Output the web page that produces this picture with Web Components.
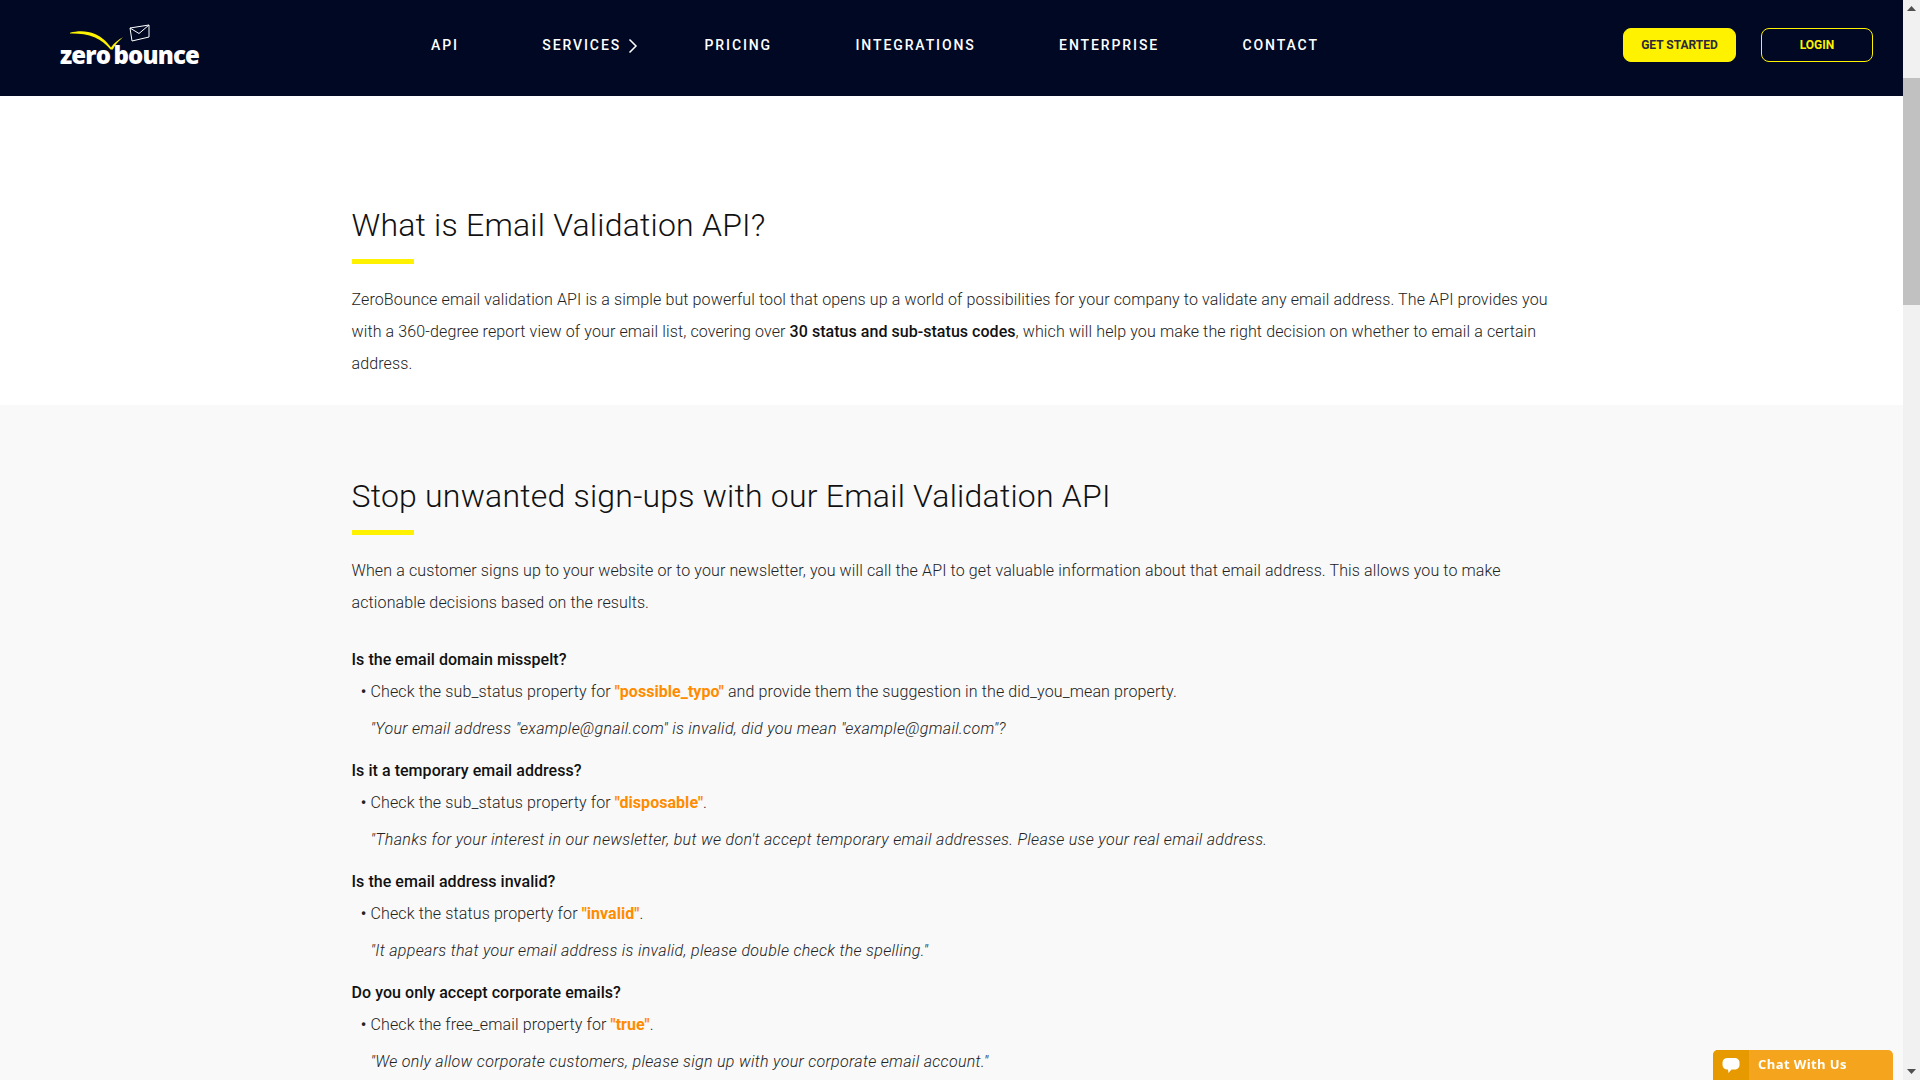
<!DOCTYPE html>
<html lang="en"><head><meta charset="utf-8"><title>ZeroBounce</title>
<style>
html,body{margin:0;height:100%;overflow:hidden;background:#fff}
body{font-family:Roboto,"Liberation Sans",sans-serif;display:flex;height:1080px}
</style></head><body>
<zb-page>
<zb-nav></zb-nav>
<zb-section>
<zb-heading>What is Email Validation API?</zb-heading>
<zb-text>ZeroBounce email validation API is a simple but powerful tool that opens up a world of possibilities for your company to validate any email address. The API provides you with a 360-degree report view of your email list, covering over <b>30 status and sub-status codes</b>, which will help you make the right decision on whether to email a certain address.</zb-text>
</zb-section>
<zb-section tint>
<zb-heading>Stop unwanted sign-ups with our Email Validation API</zb-heading>
<zb-text gap>When a customer signs up to your website or to your newsletter, you will call the API to get valuable information about that email address. This allows you to make actionable decisions based on the results.</zb-text>
<zb-faq q="Is the email domain misspelt?" quote="&quot;Your email address &quot;example@gnail.com&quot; is invalid, did you mean &quot;example@gmail.com&quot;?">Check the sub_status property for <zb-code>"possible_typo"</zb-code> and provide them the suggestion in the did_you_mean property.</zb-faq>
<zb-faq q="Is it a temporary email address?" quote="&quot;Thanks for your interest in our newsletter, but we don't accept temporary email addresses. Please use your real email address.">Check the sub_status property for <zb-code>"disposable"</zb-code>.</zb-faq>
<zb-faq q="Is the email address invalid?" quote="&quot;It appears that your email address is invalid, please double check the spelling.&quot;">Check the status property for <zb-code>"invalid"</zb-code>.</zb-faq>
<zb-faq q="Do you only accept corporate emails?" quote="&quot;We only allow corporate customers, please sign up with your corporate email account.&quot;">Check the free_email property for <zb-code>"true"</zb-code>.</zb-faq>
</zb-section>
</zb-page>
<zb-scrollbar></zb-scrollbar>
<zb-chat></zb-chat>
<script>
function def(name, css, html){
  customElements.define(name, class extends HTMLElement{
    constructor(){super();const s=this.attachShadow({mode:'open'});s.innerHTML='<style>'+css+'</style>'+(typeof html==='function'?'':html);}
    connectedCallback(){ if(typeof html==='function'){const s=this.shadowRoot;s.innerHTML='<style>'+css+'</style>'+html(this);} }
  });
}
def('zb-page',':host{display:block;flex:1;min-width:0;height:1080px;overflow:hidden}','<slot></slot>');
def('zb-link',`:host{display:block;position:relative;font:500 14px/20px Roboto,sans-serif;letter-spacing:1.9px;color:#fff;white-space:nowrap}
svg{position:absolute;left:calc(100% + 6px);top:3px}`,el=>'<slot></slot>'+(el.hasAttribute('caret')?'<svg width="12" height="16" viewBox="0 0 12 16"><path d="M2.500 1.500 9 8l-6.500 6.500" fill="none" stroke="#fff" stroke-width="1.500"/></svg>':''));
def('zb-btn',`:host{display:flex;align-items:center;justify-content:center;box-sizing:border-box;width:113px;height:34px;border-radius:8px;font:700 12px/16px Roboto,sans-serif;border:1px solid #fff200;color:#fff200}
:host([solid]){background:#fff200;color:#2a2a3a}
:host([narrow]){width:112px}`,'<slot></slot>');
def('zb-logo',`:host{display:block;position:relative;width:142px;height:44px}
svg{position:absolute;left:0;top:0}
span{position:absolute;left:0;top:15px;font:800 24px/34px "Open Sans",sans-serif;letter-spacing:-.85px;word-spacing:-2px;color:#fff;white-space:nowrap}`,
`<svg width="142" height="44" viewBox="0 0 142 44"><path d="M10 9.700C18 7.700 27 7.500 35 11 42 14 47 19 51 24.500 54 20 58 17 63 14.300 59 18 55 21.500 52.800 26.500L50.500 26.500C46 21 41 17 35 14.500 27 11 18 10.300 10 10.500Z" fill="#fff200"/><path d="M70 5 89 2 89 14 72 18ZM70 5 79 10.500 89 2" fill="none" stroke="#fff" stroke-width="1"/></svg><span>zero bounce</span>`);
def('zb-nav',`:host{display:flex;align-items:flex-start;height:96px;background:#000824;box-sizing:border-box;position:relative}
zb-logo{margin:23px 0 0 60px}
nav{display:flex;gap:83.4px;margin:35px 0 0 229px}
.b{display:flex;gap:25px;margin:28px 0 0 auto;padding-right:30px}`,
`<zb-logo></zb-logo><nav><zb-link>API</zb-link><zb-link caret>SERVICES</zb-link><zb-link>PRICING</zb-link><zb-link>INTEGRATIONS</zb-link><zb-link>ENTERPRISE</zb-link><zb-link>CONTACT</zb-link></nav><div class="b"><zb-btn solid>GET STARTED</zb-btn><zb-btn narrow>LOGIN</zb-btn></div>`);
def('zb-section',`:host{display:block;background:#fff;padding:109px 0 25px}
:host([tint]){background:#f9f9f9;padding:71px 0 120px}
.w{width:1200px;margin:0 auto}`,'<div class="w"><slot></slot></div>');
def('zb-heading',`:host{display:block;font:300 32px/40px Roboto,sans-serif;color:#111;letter-spacing:.22px}
i{display:block;width:62px;height:5px;background:#fff200;margin:14px 0 20px}`,'<slot></slot><i></i>');
def('zb-text',`:host{display:block;font:300 16px/32px Roboto,sans-serif;letter-spacing:.12px;color:#222}
:host([gap]){margin-bottom:25px}
::slotted(b){font-weight:500;color:#111;letter-spacing:.04px}`,'<slot></slot>');
def('zb-code',`:host{display:inline;font-weight:700;color:#ff8c00;letter-spacing:.04px}`,'<slot></slot>');
def('zb-faq',`:host{display:block;font:300 16px/32px Roboto,sans-serif;letter-spacing:.12px;color:#222;margin-bottom:10px}
h4{margin:0;font:500 16px/32px Roboto,sans-serif;letter-spacing:.05px;color:#111}
.li{display:flex}
.d{width:19px;text-align:right;padding-right:4px;box-sizing:border-box;font-weight:500}
.q{font-style:italic;letter-spacing:.32px;margin:5px 0 0 19px}`,
el=>`<h4>${el.getAttribute('q')}</h4><div class="li"><span class="d">•</span><span><slot></slot></span></div><div class="q">${(el.getAttribute('quote')||'').replace(/&/g,'&amp;').replace(/</g,'&lt;')}</div>`);
def('zb-scrollbar',`:host{display:flex;flex-direction:column;width:17px;height:1080px;background:#f1f1f1;flex:none}
.a{height:17px;display:flex;align-items:center;justify-content:center}
.t{margin-top:61px;height:227px;background:#c1c1c1}
.s{flex:1}`,
`<div class="a"><svg width="9" height="5" viewBox="0 0 9 5"><path d="M4.500 0 9 5H0Z" fill="#505050"/></svg></div><div class="t"></div><div class="s"></div><div class="a"><svg width="9" height="5" viewBox="0 0 9 5"><path d="M0 0H9L4.500 5Z" fill="#505050"/></svg></div>`);
def('zb-chat',`:host{position:fixed;left:1713px;top:1050px;width:180px;height:30px;display:flex;background:#f5a51d;border-radius:5px 5px 0 0;overflow:hidden;font:700 13px/30px "Open Sans",sans-serif;color:#fff;letter-spacing:.4px}
.i{width:36px;background:#e69a00;display:flex;align-items:center;justify-content:center}
svg{margin-top:2px}
span{margin-left:9px;line-height:28px}`,
`<div class="i"><svg width="18" height="18" viewBox="0 0 18 18"><path d="M5.500 1H12.500C15.500 1 17.500 3 17.500 5.500V8C17.500 10.500 15.500 12.500 12.500 12.500H9.500L6.500 16 6 12.500H5.500C2.500 12.500 .5 10.500 .5 8V5.500C.5 3 2.500 1 5.500 1Z" fill="#fff"/></svg></div><span>Chat With Us</span>`);
</script>
</body></html>
